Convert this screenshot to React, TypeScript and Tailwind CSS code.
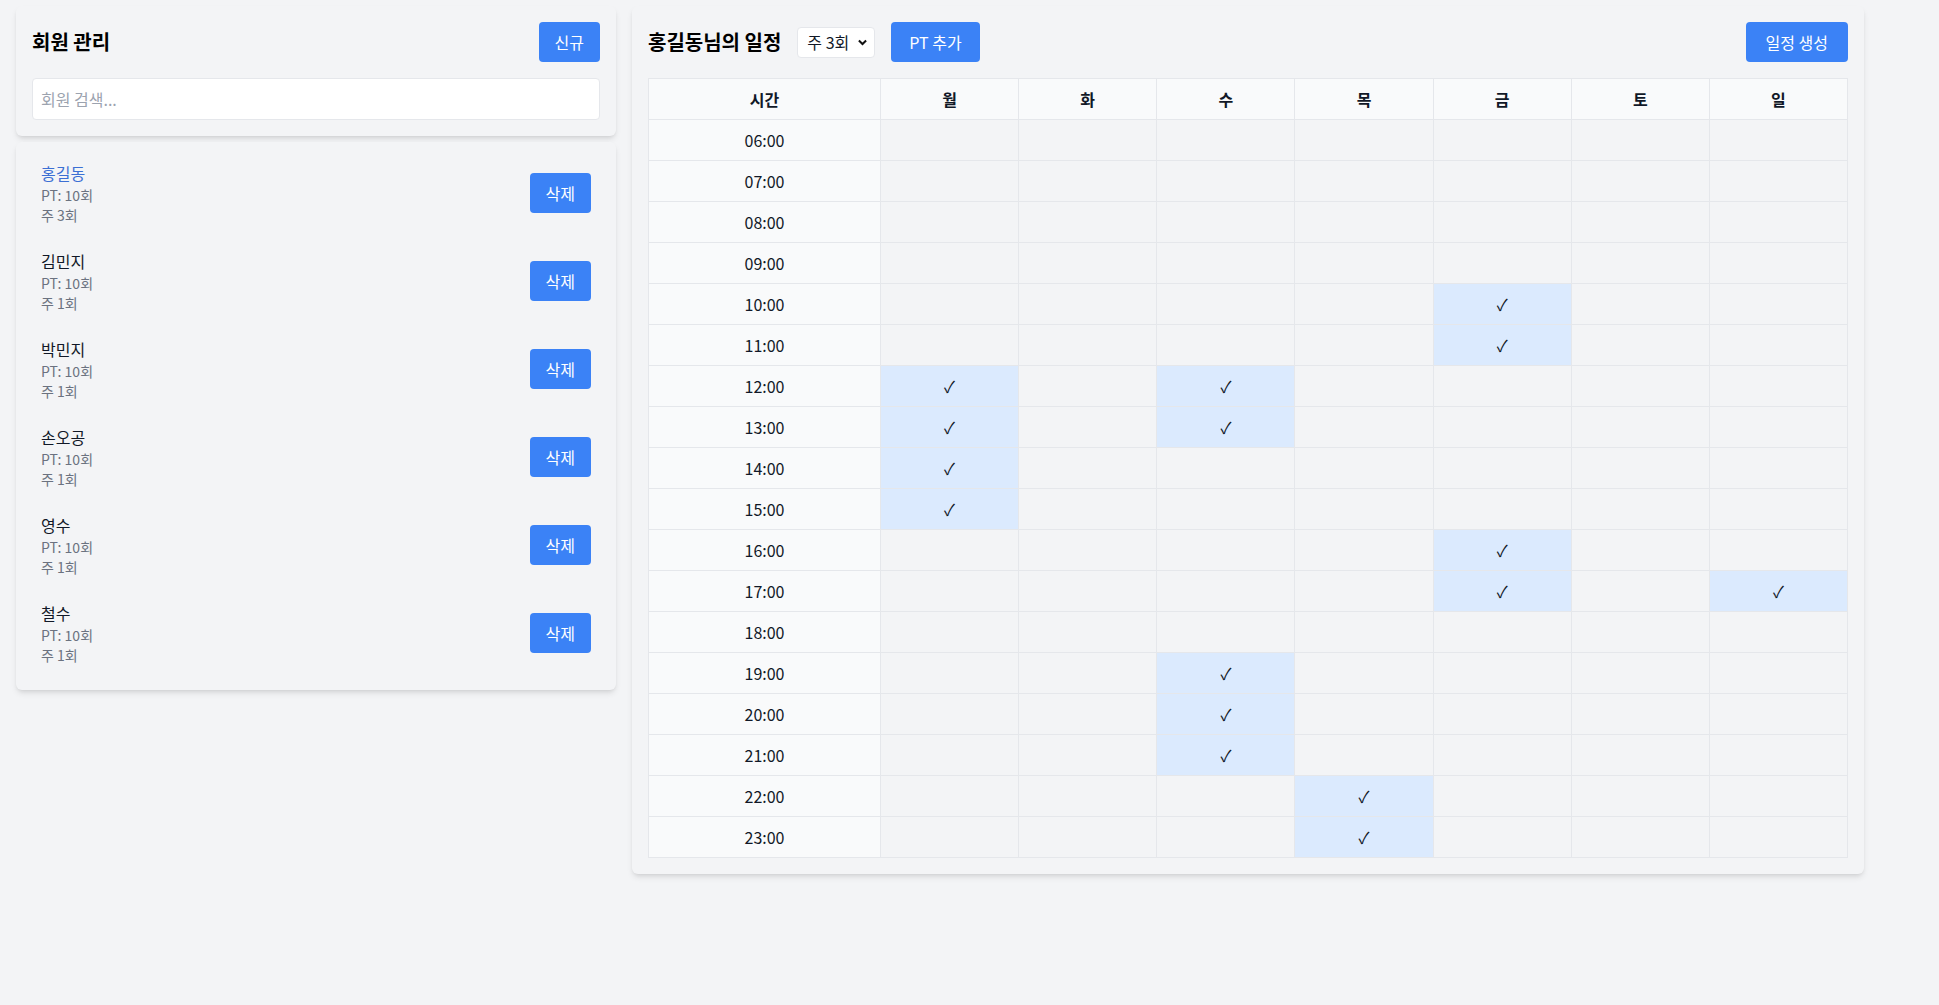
import { useState } from 'react';

// 회원 목록 (더미 데이터)
const members = [
  { name: '홍길동', pt: 10, perWeek: 3 },
  { name: '김민지', pt: 10, perWeek: 1 },
  { name: '박민지', pt: 10, perWeek: 1 },
  { name: '손오공', pt: 10, perWeek: 1 },
  { name: '영수', pt: 10, perWeek: 1 },
  { name: '철수', pt: 10, perWeek: 1 },
];

const days = ['월', '화', '수', '목', '금', '토', '일'];
const hours = Array.from({ length: 18 }, (_, i) => i + 6);

// 요일별 선택된 시간
const schedule: Record<string, number[]> = {
  월: [12, 13, 14, 15],
  수: [12, 13, 19, 20, 21],
  목: [22, 23],
  금: [10, 11, 16, 17],
  일: [17],
};

const font = { fontFamily: '"Noto Sans CJK KR", "Noto Sans", sans-serif' };

export default function App() {
  const [selected, setSelected] = useState(0);
  const [query, setQuery] = useState('');
  const [perWeek, setPerWeek] = useState('3');

  const current = members[selected];
  const filtered = members.filter((m) => m.name.includes(query));

  return (
    <div className="min-h-screen bg-[#f3f4f6] text-[#111827]" style={font}>
      <div className="flex items-start gap-4 px-4 pt-[6px]">
        {/* 왼쪽: 회원 관리 */}
        <div className="w-[600px] shrink-0 flex flex-col gap-[6px]">
          <div className="bg-[#f3f4f6] rounded-md shadow-md p-4">
            <div className="flex items-center justify-between mb-4">
              <h2 className="text-xl font-bold text-black">회원 관리</h2>
              <button className="h-10 px-4 rounded bg-[#3b82f6] text-white text-base">신규</button>
            </div>
            <input
              value={query}
              onChange={(e) => setQuery(e.target.value)}
              placeholder="회원 검색..."
              className="w-full h-[42px] px-2 bg-white border border-[#e5e7eb] rounded text-base placeholder:text-[#9ca3af] outline-none"
            />
          </div>

          <div className="bg-[#f3f4f6] rounded-md shadow-md pt-[7px] pb-[13px] px-2">
            {filtered.map((m, i) => (
              <div key={m.name} className="flex items-center justify-between px-[17px] py-3">
                <div className="cursor-pointer" onClick={() => setSelected(i)}>
                  <div className={`text-base ${i === selected ? 'text-[#3b6fd4]' : 'text-[#111827]'}`}>{m.name}</div>
                  <div className="text-sm text-[#6b7280]">PT: {m.pt}회</div>
                  <div className="text-sm text-[#6b7280]">주 {m.perWeek}회</div>
                </div>
                <button className="h-10 px-4 rounded bg-[#3b82f6] text-white text-base">삭제</button>
              </div>
            ))}
          </div>
        </div>

        {/* 오른쪽: 일정표 */}
        <div className="w-[1232px] shrink-0 bg-[#f3f4f6] rounded-md shadow-md p-4">
          <div className="flex items-center justify-between mb-4">
            <div className="flex items-center gap-4">
              <h2 className="text-xl font-bold text-black">{current.name}님의 일정</h2>
              <div className="relative">
                <select
                  value={perWeek}
                  onChange={(e) => setPerWeek(e.target.value)}
                  className="appearance-none h-[31px] w-[78px] pl-[9px] pr-6 bg-white border border-[#e5e7eb] rounded text-base outline-none"
                >
                  <option value="1">주 1회</option>
                  <option value="2">주 2회</option>
                  <option value="3">주 3회</option>
                </select>
                <svg className="absolute right-[8px] top-[12px] w-[9px] h-[7px] pointer-events-none" viewBox="0 0 10 7" fill="none" stroke="#111" strokeWidth="2.2">
                  <path d="M1 1.2l4 4 4-4" />
                </svg>
              </div>
              <button className="h-10 px-[18px] rounded bg-[#3b82f6] text-white text-base">PT 추가</button>
            </div>
            <button className="h-10 px-5 rounded bg-[#3b82f6] text-white text-base">일정 생성</button>
          </div>

          <table className="w-full table-fixed border-collapse text-base">
            <colgroup>
              <col className="w-[232px]" />
              {days.map((d) => (
                <col key={d} />
              ))}
            </colgroup>
            <thead>
              <tr className="h-[41px]">
                <th className="border border-[#e5e7eb] bg-[#f9fafb] font-bold">시간</th>
                {days.map((d) => (
                  <th key={d} className="border border-[#e5e7eb] bg-[#f9fafb] font-bold">{d}</th>
                ))}
              </tr>
            </thead>
            <tbody>
              {hours.map((h) => {
                const label = `${String(h).padStart(2, '0')}:00`;
                return (
                  <tr key={h} className="h-[41px]">
                    <td className="border border-[#e5e7eb] bg-[#f9fafb] text-center">{label}</td>
                    {days.map((d) => {
                      const on = schedule[d]?.includes(h);
                      return (
                        <td
                          key={d}
                          className={`border border-[#e5e7eb] text-center ${on ? 'bg-[#dbeafe]' : 'bg-[#f3f4f6]'}`}
                        >
                          {on ? '✓' : ''}
                        </td>
                      );
                    })}
                  </tr>
                );
              })}
            </tbody>
          </table>
        </div>
      </div>
    </div>
  );
}
